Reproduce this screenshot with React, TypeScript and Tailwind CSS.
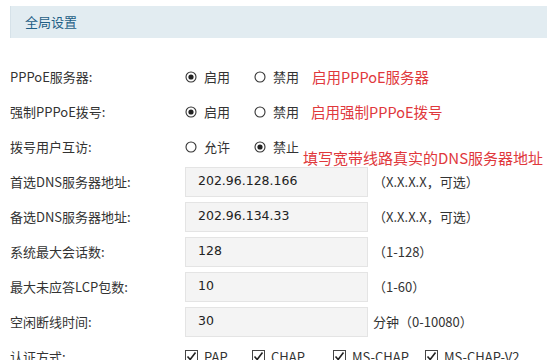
import React from 'react';

const cjk = { fontFamily: '"Noto Sans CJK SC", "Microsoft YaHei", sans-serif' };
const latin = { fontFamily: '"DejaVu Sans", Verdana, sans-serif' };

const Radio = ({ checked }: { checked?: boolean }) => (
  <svg width="12" height="12" viewBox="0 0 12 12" className="shrink-0">
    <circle cx="6" cy="6" r="5" fill="#fff" stroke="#333" strokeWidth="1.1" />
    {checked && <circle cx="6" cy="6" r="2.6" fill="#222" />}
  </svg>
);

const Check = () => (
  <svg width="13" height="13" viewBox="0 0 13 13" className="shrink-0">
    <rect x="0.5" y="0.5" width="12" height="12" fill="#fff" stroke="#444" strokeWidth="1" />
    <path d="M2.5 6.5 L5.2 9.5 L10.5 2.5" fill="none" stroke="#222" strokeWidth="1.6" />
  </svg>
);

const Row = ({ label, children }: { label: string; children?: React.ReactNode }) => (
  <div className="flex h-[35px] items-center">
    <div className="w-[175px] shrink-0 text-[13px] text-[#333]" style={cjk}>
      {label}
    </div>
    {children}
  </div>
);

const Field = ({ value, hint }: { value: string; hint: string }) => (
  <>
    <div
      className="flex h-[30px] w-[183px] shrink-0 items-center border border-[#e4e4e4] bg-[#f4f4f4] pl-[12px] text-[12.5px] text-[#222]"
      style={latin}
    >
      {value}
    </div>
    <div className="ml-[5px] text-[13px] text-[#333]" style={cjk}>
      {hint}
    </div>
  </>
);

const Choice = ({ a, b, first }: { a: string; b: string; first: boolean }) => (
  <div className="flex items-center gap-[7px] text-[13px] text-[#333]" style={cjk}>
    <Radio checked={first} />
    <span>{a}</span>
    <span className="w-[10px]" />
    <Radio checked={!first} />
    <span>{b}</span>
  </div>
);

export default function App() {
  return (
    <div className="h-[360px] w-[547px] overflow-hidden bg-white pl-[10px] pt-[6px]">
      <div className="flex h-[32px] items-center border-l border-[#d6e2e9] bg-[#e2ecf1] pl-[14px] text-[13px] text-[#1f5f86]" style={cjk}>
        全局设置
      </div>
      <div className="mt-[21px]">
        <Row label="PPPoE服务器:">
          <Choice a="启用" b="禁用" first />
          <span className="ml-[13px] text-[14.5px] text-[#e0383c]" style={cjk}>启用PPPoE服务器</span>
        </Row>
        <Row label="强制PPPoE拨号:">
          <Choice a="启用" b="禁用" first />
          <span className="ml-[12px] text-[14.5px] text-[#e0383c]" style={cjk}>启用强制PPPoE拨号</span>
        </Row>
        <div className="relative">
          <Row label="拨号用户互访:">
            <Choice a="允许" b="禁止" first={false} />
          </Row>
          <span className="absolute left-[293px] top-[21px] whitespace-nowrap text-[15px] leading-none text-[#e0383c]" style={cjk}>
            填写宽带线路真实的DNS服务器地址
          </span>
        </div>
        <Row label="首选DNS服务器地址:">
          <Field value="202.96.128.166" hint="（X.X.X.X，可选）" />
        </Row>
        <Row label="备选DNS服务器地址:">
          <Field value="202.96.134.33" hint="（X.X.X.X，可选）" />
        </Row>
        <Row label="系统最大会话数:">
          <Field value="128" hint="（1-128）" />
        </Row>
        <Row label="最大未应答LCP包数:">
          <Field value="10" hint="（1-60）" />
        </Row>
        <Row label="空闲断线时间:">
          <Field value="30" hint="分钟（0-10080）" />
        </Row>
        <Row label="认证方式:">
          <div className="flex items-center text-[13px] text-[#333]" style={cjk}>
            <Check />
            <span className="ml-[6px] w-[48px]">PAP</span>
            <Check />
            <span className="ml-[6px] w-[62px]">CHAP</span>
            <Check />
            <span className="ml-[6px] w-[73px]">MS-CHAP</span>
            <Check />
            <span className="ml-[6px]">MS-CHAP-V2</span>
          </div>
        </Row>
      </div>
    </div>
  );
}
